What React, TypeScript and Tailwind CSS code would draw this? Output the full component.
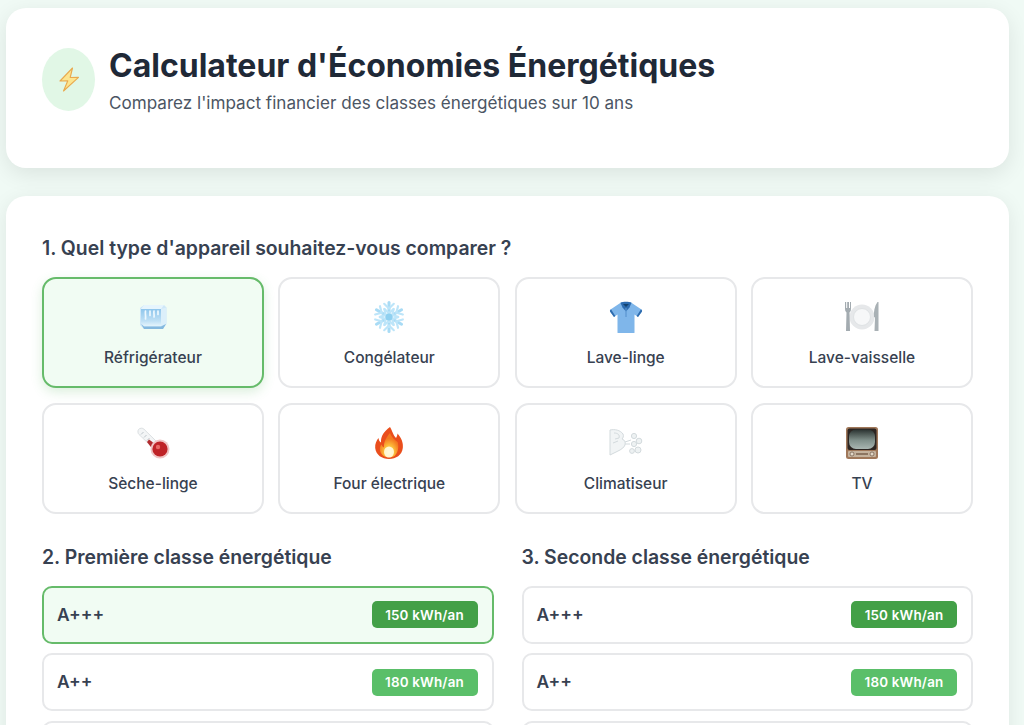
const font = { fontFamily: "Inter, 'Liberation Sans', sans-serif" };

function Bolt() {
  return (
    <svg width="22" height="27" viewBox="0 0 22 26">
      <path d="M14.5 1.5 L2 14.5 L9.8 14.2 L5.5 24.5 L20.5 10.8 L12.2 11 Z" fill="#fce58f" stroke="#e9a94e" strokeWidth="1.1" strokeLinejoin="round" />
    </svg>
  );
}
function Ice() {
  return (
    <svg width="28" height="26" viewBox="0 0 28 26">
      <defs>
        <linearGradient id="icef" x1="0" y1="0" x2="0" y2="1">
          <stop offset="0%" stopColor="#8fc6ec" />
          <stop offset="70%" stopColor="#bfe0f5" />
          <stop offset="100%" stopColor="#e4f4fc" />
        </linearGradient>
      </defs>
      <path d="M5 1 H25 L27.5 3.5 V20 L24 25 H5 L1 21 V4 Z" fill="#cfe8f8" />
      <path d="M2 5 H22 V22 H5 L2 19 Z" fill="url(#icef)" />
      <path d="M5 1 H25 L22 5 H2 Z" fill="#e6f5fd" />
      <path d="M22 5 L27.5 3.5 V20 L22 22 Z" fill="#dceffa" />
      <path d="M2 20 L5 25 H24 L27 20 L22 22.5 H5 Z" fill="#85b9df" />
      <path d="M6.5 7 C6 10 7 12 6.5 15 M11 7 V11.5 M15 7 C14.5 9 15.5 11 15 13 M19 7 V10.5" stroke="#eef8fe" strokeWidth="1.7" strokeLinecap="round" fill="none" />
    </svg>
  );
}
function Snow() {
  const arm = (
    <g>
      <path d="M17 17 V2.5" stroke="#a8dbf5" strokeWidth="3" strokeLinecap="round" />
      <path d="M12.2 3.8 L17 8.5 L21.8 3.8 M12.5 9 L17 13.2 L21.5 9" fill="none" stroke="#bde5f9" strokeWidth="2.2" strokeLinecap="round" />
    </g>
  );
  return (
    <svg width="34" height="34" viewBox="0 0 34 34">
      {[0, 60, 120, 180, 240, 300].map((a) => (
        <g key={a} transform={`rotate(${a} 17 17)`}>{arm}</g>
      ))}
      <circle cx="17" cy="17" r="3.5" fill="#8fd0f0" />
    </svg>
  );
}
function Shirt() {
  return (
    <svg width="34" height="33" viewBox="0 0 34 33">
      <path d="M12 1.5 H22 L32.5 8.5 Q33.5 9.5 33 10.5 L29 16 L25.5 13.5 V31.5 Q25.5 32 25 32 H9 Q8.5 32 8.5 31.5 V13.5 L5 16 L1 10.5 Q0.5 9.5 1.5 8.5 Z" fill="#7fb6ea" />
      <path d="M1 10.5 L5 16 L6.3 15 L2 8.3 Q0.5 9.5 1 10.5 Z M33 10.5 L29 16 L27.7 15 L32 8.3 Q33.5 9.5 33 10.5 Z" fill="#2f6cae" />
      <path d="M11.5 1.8 C14 0.5 20 0.5 22.5 1.8 L20.5 6.5 L17 10.5 L13.5 6.5 Z" fill="#2d6cb0" />
      <path d="M14 3 H20 L17 6 Z" fill="#12426f" />
      <path d="M17 7 V16" stroke="#5a95d0" strokeWidth="1.2" />
    </svg>
  );
}
function Plate() {
  return (
    <svg width="36" height="32" viewBox="0 0 36 32">
      <circle cx="18" cy="16" r="12.5" fill="#e6e8ea" />
      <circle cx="18" cy="16" r="8.5" fill="#f6f7f8" stroke="#dfe2e4" />
      <path d="M1 1 V8 Q1 11 2.5 11.5 L2 30 H6 L5.5 11.5 Q7 11 7 8 V1 H6 V7 H5 V1 H3.2 V7 H2.2 V1 Z" fill="#a3abb0" />
      <path d="M33.5 1 C30.5 5 29.5 11 30 16 L31 16.5 L30.5 30 H34.5 V1 Z" fill="#a9b1b5" />
    </svg>
  );
}
function Thermo() {
  return (
    <svg width="34" height="32" viewBox="0 0 34 32">
      <path d="M2.5 2.5 C4 0.8 6.5 0.8 8 2.2 L21 15 L16 20 L3 7.5 C1.8 6.3 1.5 4 2.5 2.5 Z" fill="#f3f5f6" stroke="#d3d8db" strokeWidth="0.8" />
      <path d="M5 7.5 L7.5 5 M8 10.5 L10.5 8 M11 13.5 L13.5 11" stroke="#bdc5ca" strokeWidth="1" />
      <path d="M13 12.5 L22 19 L18 24 L11 15 Z" fill="#b12a2d" />
      <circle cx="24" cy="22" r="9.5" fill="#f0c4c4" />
      <circle cx="24" cy="22" r="7.6" fill="#bf2327" />
      <circle cx="22" cy="20" r="2.2" fill="#e86a66" />
    </svg>
  );
}
function Fire() {
  return (
    <svg width="30" height="34" viewBox="0 0 30 34">
      <defs>
        <radialGradient id="fi" cx="50%" cy="78%" r="55%">
          <stop offset="0%" stopColor="#fff6c2" />
          <stop offset="45%" stopColor="#fdc23d" />
          <stop offset="100%" stopColor="#f4791f" />
        </radialGradient>
      </defs>
      <path d="M16 1 C19 6 19 9 22 12 C23 10 23.5 9 23.5 7.5 C27.5 12 29.5 17 28.8 22 C28 29 22 33 15 33 C8 33 2 29 1.2 22 C0.8 18 2.5 14.5 4.5 12 C4.8 14 5.5 15.5 7 16.5 C6.5 10 10.5 5 16 1 Z" fill="#ea4e1c" />
      <path d="M16 7 C18 12 21 14 23.5 16 C25 20 24.5 26 21 29.5 C19 32 11 32 8.5 29 C5.5 26 5 21 7.5 18.5 C8 20 9 21 10 21.5 C9.5 16 12.5 11 16 7 Z" fill="url(#fi)" />
      <ellipse cx="15" cy="26" rx="5" ry="5.5" fill="#fffbe0" opacity="0.9" />
    </svg>
  );
}
function Wind() {
  return (
    <svg width="34" height="28" viewBox="0 0 34 28">
      <path d="M1 1 C6 0 11 1 14 5 C15 7 14 9 13 10 C16 11 17 14 15.5 17 C14 20 9 22 5 24 L1 26 Z" fill="#f1f4f5" stroke="#d3dadd" strokeWidth="1" />
      <path d="M5 4 C9 4 11 6 10 9 L6 10 M4 14 L9 12" fill="none" stroke="#d3dadd" strokeWidth="1" />
      <path d="M16 13 L22 11 M16 15 H21" stroke="#d3dadd" strokeWidth="1" />
      <circle cx="25" cy="7" r="2.6" fill="#eef2f3" stroke="#d3dadd" />
      <circle cx="30" cy="12" r="2.8" fill="#eef2f3" stroke="#d3dadd" />
      <circle cx="25" cy="15" r="2.6" fill="#eef2f3" stroke="#d3dadd" />
      <circle cx="29" cy="21" r="3" fill="#eef2f3" stroke="#d3dadd" />
      <circle cx="23" cy="22" r="2.4" fill="#eef2f3" stroke="#d3dadd" />
    </svg>
  );
}
function Tv() {
  return (
    <svg width="34" height="34" viewBox="0 0 34 34">
      <defs>
        <linearGradient id="tv" x1="0" y1="0" x2="0" y2="1">
          <stop offset="0%" stopColor="#2a3230" />
          <stop offset="55%" stopColor="#7f8f8a" />
          <stop offset="100%" stopColor="#a9b6b2" />
        </linearGradient>
      </defs>
      <rect x="1" y="1" width="32" height="32" rx="2.5" fill="#a0785a" />
      <rect x="2.5" y="2.5" width="29" height="21.5" rx="2" fill="#2c2522" />
      <rect x="4" y="3.5" width="26" height="19.5" rx="7" fill="url(#tv)" />
      <rect x="3" y="25" width="28" height="6" rx="1" fill="#c4b29d" />
      <circle cx="7" cy="28" r="2" fill="#e3d8c8" stroke="#6e5847" strokeWidth="0.7" />
      <circle cx="27" cy="28" r="2" fill="#e3d8c8" stroke="#6e5847" strokeWidth="0.7" />
      <rect x="11" y="27" width="12" height="2" fill="#8c7561" />
    </svg>
  );
}

const appliances: [string, () => React.ReactElement][] = [
  ["Réfrigérateur", Ice],
  ["Congélateur", Snow],
  ["Lave-linge", Shirt],
  ["Lave-vaisselle", Plate],
  ["Sèche-linge", Thermo],
  ["Four électrique", Fire],
  ["Climatiseur", Wind],
  ["TV", Tv],
];

function ClassRow({ name, kwh, color, selected }: { name: string; kwh: string; color: string; selected?: boolean }) {
  return (
    <div
      className={`flex h-[58px] shrink-0 items-center justify-between rounded-[10px] border-2 pr-[14px] pl-[13px] ${
        selected ? "border-[#66bb6a] bg-[#f1fcf3]" : "border-[#e7e8ea] bg-white"
      }`}
    >
      <span className="text-[17.4px] font-semibold text-[#374151]">{name}</span>
      <span className={`flex h-[27px] w-[106px] items-center justify-center rounded-[5px] text-[13.4px] font-semibold tracking-[0.2px] text-white ${color}`}>
        {kwh}
      </span>
    </div>
  );
}

function ClassColumn({ title, first }: { title: string; first?: boolean }) {
  return (
    <div className="flex min-w-0 flex-col">
      <h2 className="mb-[15px] text-[19.4px] leading-[28px] font-semibold text-[#374151]">{title}</h2>
      <div className="flex flex-col gap-[9.6px]">
        <ClassRow name="A+++" kwh="150 kWh/an" color="bg-[#43a047]" selected={first} />
        <ClassRow name="A++" kwh="180 kWh/an" color="bg-[#5abf69]" />
        <div className="h-[58px] shrink-0 rounded-[10px] border-2 border-[#e7e8ea] bg-white" />
      </div>
    </div>
  );
}

export default function App() {
  return (
    <div style={font} className="flex h-[725px] flex-col gap-[28px] overflow-hidden bg-[#f0faf5] pt-[8px] pr-[15px] pl-[6px]">
      <header className="flex h-[160px] shrink-0 items-start gap-[14px] rounded-[20px] bg-white pt-[36px] pl-[36px] shadow-[0_6px_22px_rgba(0,0,0,0.09)]">
        <div className="mt-[4px] flex h-[63px] w-[53px] items-center justify-center rounded-[50%] bg-[#e1f7e6]">
          <Bolt />
        </div>
        <div>
          <h1 className="mt-[1px] text-[32px] leading-[42px] font-bold text-[#1f2937]">Calculateur d'Économies Énergétiques</h1>
          <p className="mt-[4px] text-[17.1px] leading-[24px] text-[#4b5563]">
            Comparez l'impact financier des classes énergétiques sur 10 ans
          </p>
        </div>
      </header>

      <main className="flex-1 rounded-[20px] bg-white px-[36px] pt-[38px] shadow-[0_4px_20px_rgba(0,0,0,0.08)]">
        <h2 className="mb-[15px] text-[19.4px] leading-[28px] font-semibold text-[#374151]">
          1. Quel type d'appareil souhaitez-vous comparer ?
        </h2>
        <div className="grid grid-cols-4 gap-[14.4px]">
          {appliances.map(([label, Icon], i) => (
            <div
              key={label}
              className={`flex h-[111.4px] flex-col items-center rounded-[14px] border-2 ${
                i === 0
                  ? "border-[#66bb6a] bg-[#f1fcf3] shadow-[0_4px_12px_rgba(76,175,80,0.2)]"
                  : "border-[#e7e8ea] bg-white"
              }`}
            >
              <div className="mt-[20px] flex h-[36px] items-center justify-center">
                <Icon />
              </div>
              <span className="mt-[12px] text-[15.5px] leading-[22px] font-medium text-[#374151]">{label}</span>
            </div>
          ))}
        </div>
        <div className="mt-[28.6px] grid grid-cols-2 gap-[28px]">
          <ClassColumn title="2. Première classe énergétique" first />
          <ClassColumn title="3. Seconde classe énergétique" />
        </div>
      </main>
    </div>
  );
}
